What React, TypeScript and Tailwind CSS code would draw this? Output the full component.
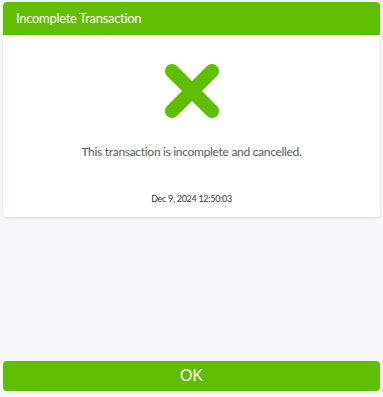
export default function App() {
  return (
    <div className="w-[383px] h-[397px] bg-[#f5f7fb] flex flex-col px-[3px] pt-[2px] pb-[6px]" style={{ fontFamily: 'Lato, "Noto Sans", sans-serif' }}>
      <div className="bg-white rounded-[4px] shadow-[0_1px_3px_rgba(0,0,0,0.12)] overflow-hidden h-[215px] flex flex-col">
        <div className="bg-[#5fbe00] h-[33px] flex items-center pl-[13px] text-white text-[13px] tracking-[-0.3px]">Incomplete Transaction</div>
        <div className="flex flex-col items-center">
          <svg width="58" height="58" viewBox="0 0 58 58" className="mt-[27px]">
            <path d="M9 9 L49 49 M49 9 L9 49" stroke="#5fbe00" strokeWidth="14" strokeLinecap="round" fill="none" />
          </svg>
          <div className="mt-[23px] text-[12px] tracking-[-0.3px] text-[#555a60]">This transaction is incomplete and cancelled.</div>
          <div className="mt-[31px] text-[9px] tracking-[-0.3px] text-[#333]">Dec 9, 2024 12:50:03</div>
        </div>
      </div>
      <div className="flex-1" />
      <button className="h-[30px] w-full bg-[#5fbe00] rounded-[4px] text-white text-[16px]" style={{ fontFamily: '"Liberation Sans", Arial, sans-serif' }}>OK</button>
    </div>
  );
}
